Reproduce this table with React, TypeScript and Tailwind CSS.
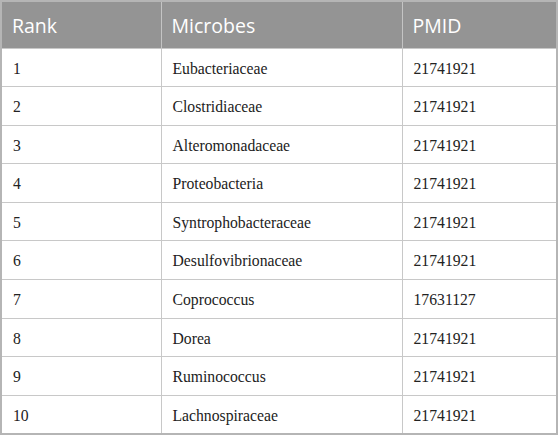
import React from 'react';

// Microbe ranking table
const rows: [number, string, string][] = [
    [1, 'Eubacteriaceae', '21741921'],
    [2, 'Clostridiaceae', '21741921'],
    [3, 'Alteromonadaceae', '21741921'],
    [4, 'Proteobacteria', '21741921'],
    [5, 'Syntrophobacteraceae', '21741921'],
    [6, 'Desulfovibrionaceae', '21741921'],
    [7, 'Coprococcus', '17631127'],
    [8, 'Dorea', '21741921'],
    [9, 'Ruminococcus', '21741921'],
    [10, 'Lachnospiraceae', '21741921'],
];

const App: React.FC = () => {
    return (
        <div className="w-[558px] h-[435px] bg-white">
            <table className="w-[558px] border-collapse table-fixed border-2 border-[#b5b5b5]">
                <colgroup>
                    <col className="w-[160px]" />
                    <col className="w-[241px]" />
                    <col />
                </colgroup>
                <thead>
                    <tr className="h-[47px] bg-[#949494] text-white text-[19.5px] font-['Open_Sans',sans-serif]">
                        <th className="text-left font-normal pl-[10px] pt-[2px] border-r border-[#c4c4c4]">Rank</th>
                        <th className="text-left font-normal pl-[10px] pt-[2px] border-r border-[#c4c4c4]">Microbes</th>
                        <th className="text-left font-normal pl-[10px] pt-[2px]">PMID</th>
                    </tr>
                </thead>
                <tbody className="font-['Liberation_Serif',serif] text-[15.7px] text-[#222222]">
                    {rows.map(([rank, name, pmid]) => (
                        <tr key={rank} className="h-[38.6px] border-t border-[#c8c8c8]">
                            <td className="pl-[11px] pt-[2px] border-r border-[#c8c8c8]">{rank}</td>
                            <td className="pl-[11px] pt-[2px] border-r border-[#c8c8c8]">{name}</td>
                            <td className="pl-[11px] pt-[2px]">{pmid}</td>
                        </tr>
                    ))}
                </tbody>
            </table>
        </div>
    );
};

export default App;
